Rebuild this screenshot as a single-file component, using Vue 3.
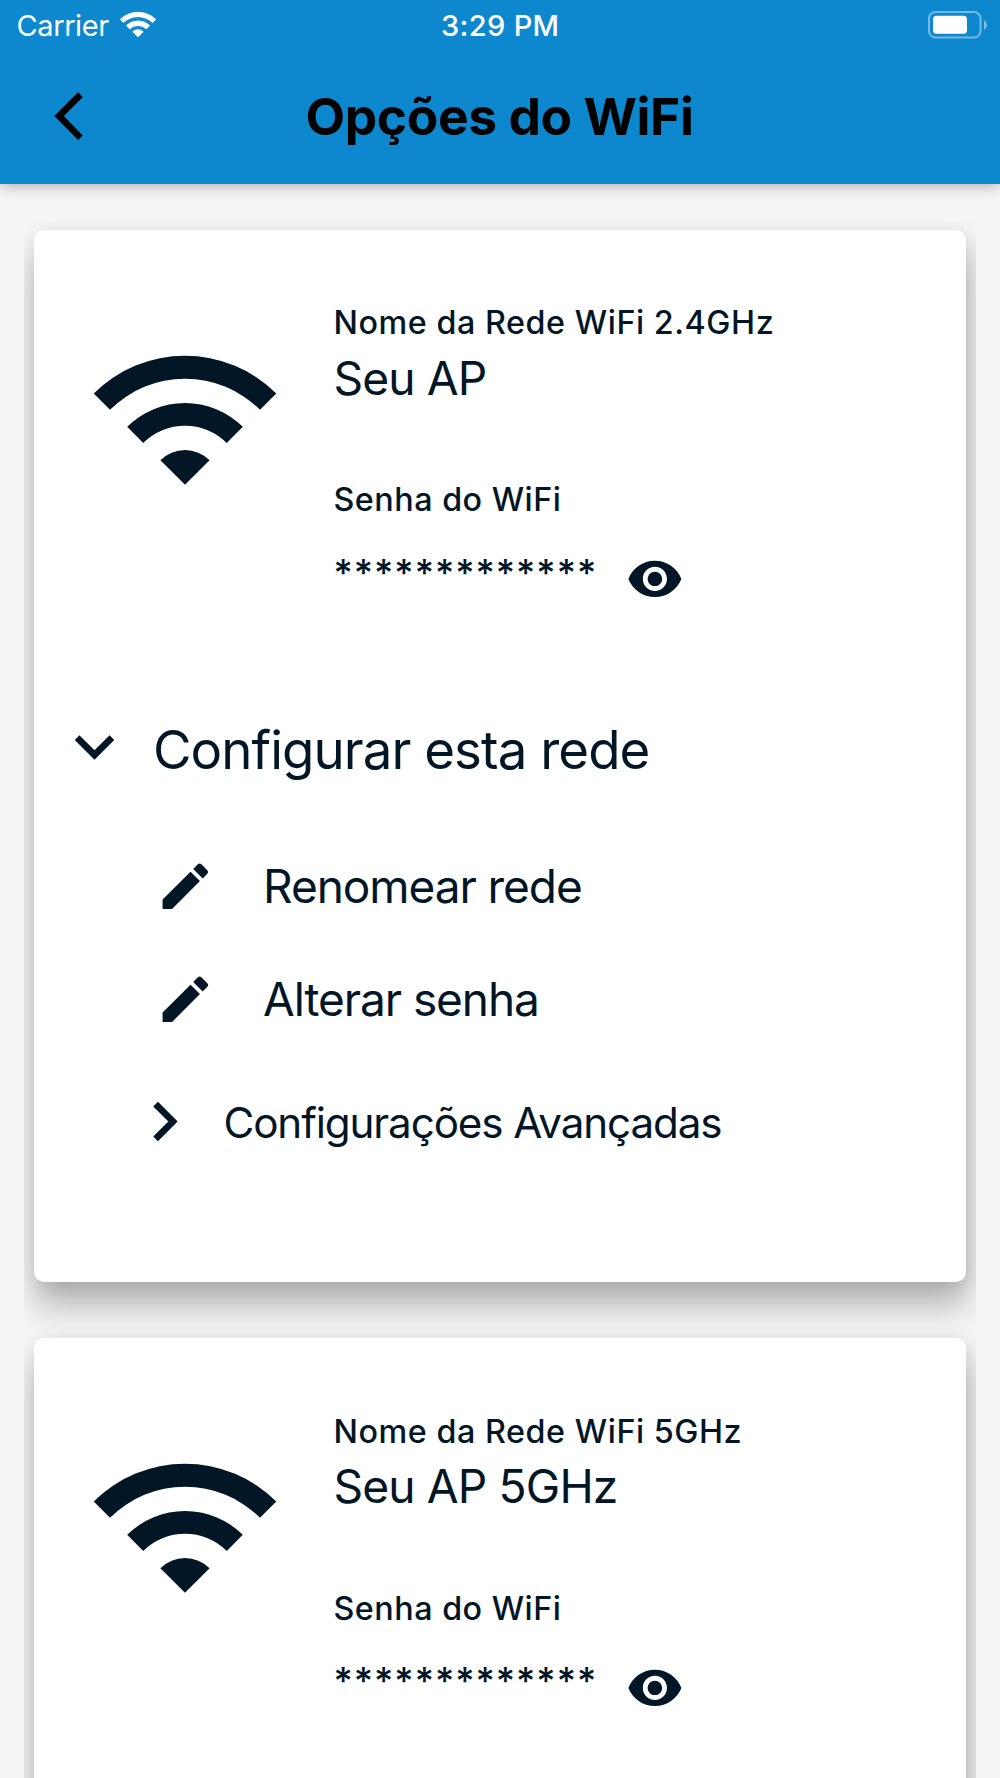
<script setup>
const networks = [
  { label: 'Nome da Rede WiFi 2.4GHz', name: 'Seu AP', expanded: true },
  { label: 'Nome da Rede WiFi 5GHz', name: 'Seu AP 5GHz', expanded: false }
]
const password = '*************'
const actions = ['Renomear rede', 'Alterar senha']
</script>

<template>
  <div class="screen">
    <header class="header">
      <div class="status">
        <div class="carrier">
          <span>Carrier</span>
          <svg class="signal" width="38" height="28" viewBox="0 0 38 28">
            <g transform="translate(19 27.3)" fill="#fff" stroke="#fff" stroke-width="1" stroke-linejoin="round">
              <path d="M-17.7-17.9A25.8 25.8 0 0 1 17.7-17.9L14.6-14.8A21 21 0 0 0-14.6-14.8Z" />
              <path d="M-11.6-11.7A16.8 16.8 0 0 1 11.6-11.7L8.3-8.5A11.9 11.9 0 0 0-8.3-8.5Z" />
              <path d="M-5.2-5.5A7.7 7.7 0 0 1 5.2-5.5L0-.6Z" />
            </g>
          </svg>
        </div>
        <span class="clock">3:29 PM</span>
        <svg class="battery" width="60" height="28" viewBox="0 0 60 28">
          <rect x="1" y="1" width="51.5" height="25.5" rx="6.5" fill="none" stroke="#fff" stroke-opacity=".42" stroke-width="2" />
          <rect x="5" y="4.7" width="34" height="18" rx="3.5" fill="#fff" />
          <path d="M56 9Q59 11 59 14T56 19Z" fill="#fff" fill-opacity=".45" />
        </svg>
      </div>
      <div class="bar">
        <svg class="back" width="30" height="50" viewBox="0 0 30 50">
          <path d="M24.1.2 28.8 4.9 9.9 24.1 28.8 43.4 24.1 48 .3 24.1Z" fill="#000" />
        </svg>
        <h1>Opções do WiFi</h1>
      </div>
    </header>

    <main class="list">
      <section v-for="net in networks" :key="net.name" class="card">
        <div class="summary">
          <svg class="wifi" width="184" height="130" viewBox="-92 -130 184 130">
            <path d="M-91.3-91.5A129.3 129.3 0 0 1 91.3-91.5L75-75.2A106.2 106.2 0 0 0-75-75.2Z" />
            <path d="M-57.8-58.2A82 82 0 0 1 57.8-58.2L41.8-42A59.2 59.2 0 0 0-41.8-42Z" />
            <path d="M-24.6-24.8A35 35 0 0 1 24.6-24.8L0-.2Z" />
          </svg>
          <div class="details">
            <p class="label">{{ net.label }}</p>
            <p class="name">{{ net.name }}</p>
            <p class="label password-label">Senha do WiFi</p>
            <div class="password">
              <span class="stars">{{ password }}</span>
              <svg class="eye" width="57.8" height="57.8" viewBox="0 0 24 24">
                <path d="M12 4.5C7 4.5 2.73 7.61 1 12c1.73 4.39 6 7.5 11 7.5s9.27-3.11 11-7.5c-1.73-4.39-6-7.5-11-7.5zM12 17c-2.76 0-5-2.24-5-5s2.24-5 5-5 5 2.24 5 5-2.24 5-5 5zm0-8c-1.66 0-3 1.34-3 3s1.34 3 3 3 3-1.34 3-3-1.34-3-3-3z" />
              </svg>
            </div>
          </div>
        </div>

        <template v-if="net.expanded">
          <div class="row configure">
            <svg width="79" height="79" viewBox="0 0 24 24">
              <path d="M7.41 8.59 12 13.17l4.59-4.58L18 10l-6 6-6-6z" />
            </svg>
            <span>Configurar esta rede</span>
          </div>
          <div v-for="action in actions" :key="action" class="row action">
            <svg width="60.6" height="60.6" viewBox="0 0 24 24">
              <path d="M3 17.25V21h3.75L17.81 9.94l-3.75-3.75zM20.71 7.04a1 1 0 0 0 0-1.41l-2.34-2.34a1 1 0 0 0-1.41 0l-1.83 1.83 3.75 3.75z" />
            </svg>
            <span>{{ action }}</span>
          </div>
          <div class="row advanced">
            <svg width="79" height="79" viewBox="0 0 24 24">
              <path d="M8.59 16.59 13.17 12 8.59 7.41 10 6l6 6-6 6z" />
            </svg>
            <span>Configurações Avançadas</span>
          </div>
        </template>
      </section>
    </main>
  </div>
</template>

<style>
body {
  background: #f5f5f5;
}
</style>

<style scoped>
.screen {
  width: 1000px;
  height: 1778px;
  overflow: hidden;
  display: flex;
  flex-direction: column;
  background: #f5f5f5;
  color: #031626;
  font-family: Inter, "Liberation Sans", sans-serif;
}
.header {
  flex: none;
  height: 183.6px;
  background: #0d88ce;
  box-shadow: 0 3px 12px rgba(0, 0, 0, 0.26);
}
.status {
  display: grid;
  grid-template-columns: 1fr auto 1fr;
  height: 50px;
  padding: 0 12px 0 16.5px;
  color: #fff;
  font-size: 29px;
  line-height: 51px;
}
.carrier {
  display: flex;
  letter-spacing: -0.4px;
}
.signal {
  margin: 10px 0 0 10px;
}
.clock {
  font-weight: 500;
  letter-spacing: 0.35px;
  margin-right: 4px;
}
.battery {
  justify-self: end;
  margin-top: 10.5px;
}
.bar {
  display: flex;
  height: 133px;
}
.back {
  margin: 42px 0 0 53.5px;
}
h1 {
  margin: 31px 0 0 222px;
  font-size: 51.5px;
  line-height: 70px;
  font-weight: 700;
  letter-spacing: -0.4px;
  color: #000;
}
.list {
  flex: none;
  display: flex;
  flex-direction: column;
  gap: 56px;
  margin: 36.4px 24px 0;
  padding: 10px 10px 0;
  height: 1548px;
  overflow: hidden;
}
.card {
  flex: none;
  box-sizing: border-box;
  height: 1052.5px;
  padding-top: 73.4px;
  border-radius: 10px;
  background: #fff;
  box-shadow: 1px 26px 32px rgba(0, 0, 0, 0.23), 3px 5px 22px rgba(0, 0, 0, 0.13);
}
.card svg {
  flex: none;
  fill: #031626;
}
.summary {
  display: flex;
  height: 397.6px;
}
.wifi {
  margin: 51.6px 0 0 58.8px;
}
.details {
  margin-left: 56.7px;
}
p {
  margin: 0;
  white-space: nowrap;
}
.label {
  font-size: 32.3px;
  line-height: 40px;
  font-weight: 500;
  letter-spacing: 0.55px;
}
.name {
  margin-top: 4.2px;
  font-size: 46.2px;
  line-height: 60px;
  letter-spacing: -0.87px;
}
.password-label {
  margin-top: 72.7px;
  letter-spacing: 0.5px;
}
.password {
  display: flex;
  margin-top: 29.8px;
}
.stars {
  margin-top: 2.5px;
  width: 292.5px;
  box-sizing: border-box;
  font-size: 37px;
  line-height: 40px;
  font-weight: 500;
  letter-spacing: 1.03px;
}
.row {
  display: flex;
  align-items: center;
  white-space: nowrap;
}
.configure {
  height: 100px;
  padding-left: 20.8px;
  font-size: 52.8px;
  letter-spacing: -0.93px;
}
.configure svg {
  margin-right: 19.1px;
  margin-top: -9px;
}
.configure span {
  margin-top: -2px;
}
.action {
  height: 112.8px;
  padding-left: 120.6px;
  font-size: 46px;
  letter-spacing: -1.07px;
}
.action svg {
  margin-right: 47.9px;
}
.action span {
  margin-top: -1px;
}
.configure + .action {
  margin-top: 29px;
}
.advanced {
  height: 113px;
  margin-top: 9.2px;
  padding-left: 90.5px;
  font-size: 42.2px;
  letter-spacing: -1.12px;
}
.advanced svg {
  margin-right: 20px;
}
.advanced span {
  margin-top: 3px;
}
</style>
